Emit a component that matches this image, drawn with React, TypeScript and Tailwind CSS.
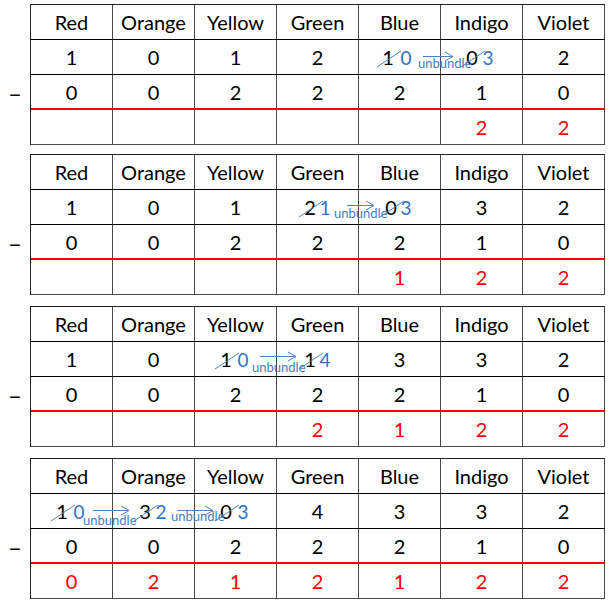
import React from "react";

const HEAD = ["Red", "Orange", "Yellow", "Green", "Blue", "Indigo", "Violet"];

type Ann = {
  black: [number, string][];
  blue: [number, string][];
  arrows: [number, number, number][];
  labels: [number, number][];
};

type T = {
  top: string[];
  sub: string[];
  res: string[];
  ann: Ann;
  mt: string;
};

const TABLES: T[] = [
  {
    top: ["1", "0", "1", "2", "", "", "2"],
    sub: ["0", "0", "2", "2", "2", "1", "0"],
    res: ["", "", "", "", "", "2", "2"],
    mt: "mt-[4px]",
    ann: {
      black: [
        [357, "1"],
        [441, "0"],
      ],
      blue: [
        [375, "0"],
        [457, "3"],
      ],
      arrows: [[392, 422, 16]],
      labels: [[387, 17]],
    },
  },
  {
    top: ["1", "0", "1", "", "", "3", "2"],
    sub: ["0", "0", "2", "2", "2", "1", "0"],
    res: ["", "", "", "", "1", "2", "2"],
    mt: "mt-[9px]",
    ann: {
      black: [
        [279, "2"],
        [360, "0"],
      ],
      blue: [
        [294, "1"],
        [375, "3"],
      ],
      arrows: [[316, 343, 15]],
      labels: [[303, 17]],
    },
  },
  {
    top: ["1", "0", "", "", "3", "3", "2"],
    sub: ["0", "0", "2", "2", "2", "1", "0"],
    res: ["", "", "", "2", "1", "2", "2"],
    mt: "mt-[11px]",
    ann: {
      black: [
        [195, "1"],
        [279, "1"],
      ],
      blue: [
        [212, "0"],
        [294, "4"],
      ],
      arrows: [[229, 265, 14]],
      labels: [[221, 19]],
    },
  },
  {
    top: ["", "", "", "4", "3", "3", "2"],
    sub: ["0", "0", "2", "2", "2", "1", "0"],
    res: ["0", "2", "1", "2", "1", "2", "2"],
    mt: "mt-[11px]",
    ann: {
      black: [
        [31, "1"],
        [114, "3"],
        [195, "0"],
      ],
      blue: [
        [48, "0"],
        [130, "2"],
        [212, "3"],
      ],
      arrows: [
        [62, 98, 16],
        [146, 182, 16],
      ],
      labels: [
        [52, 20],
        [140, 16],
      ],
    },
  },
];

function Row({
  cells,
  className,
  textClass,
  children,
}: {
  cells: string[];
  className: string;
  textClass: string;
  children?: React.ReactNode;
}) {
  return (
    <div className={`relative grid grid-cols-[repeat(7,82px)] h-[35px] ${className}`}>
      {cells.map((c, i) => (
        <div
          key={i}
          className={`flex items-center justify-center border-r border-[#4a4a4a] ${textClass}`}
        >
          {c}
        </div>
      ))}
      {children}
    </div>
  );
}

function Overlay({ ann }: { ann: Ann }) {
  return (
    <div className="absolute inset-0 pointer-events-none">
      {ann.black.map(([x, t], i) => (
        <span
          key={"k" + i}
          className="absolute top-0 h-full flex items-center -translate-x-1/2 text-[20px] text-black"
          style={{ left: x }}
        >
          {t}
        </span>
      ))}
      {ann.blue.map(([x, t], i) => (
        <span
          key={"b" + i}
          className="absolute top-[1px] h-full flex items-center -translate-x-1/2 text-[19px] text-[#2e75c6]"
          style={{ left: x }}
        >
          {t}
        </span>
      ))}
      {ann.labels.map(([x, y], i) => (
        <span
          key={"l" + i}
          className="absolute leading-none text-[13px] text-[#3d7fc0]"
          style={{ left: x, top: y }}
        >
          unbundle
        </span>
      ))}
      <svg className="absolute inset-0" width={574} height={35}>
        {ann.black.map(([x], i) => (
          <line
            key={"s" + i}
            x1={x - 11}
            y1={27}
            x2={x + 13}
            y2={11}
            stroke="#4f81bd"
            strokeWidth={1}
          />
        ))}
        {ann.arrows.map(([x1, x2, y], i) => (
          <g key={"a" + i} stroke="#4f81bd" strokeWidth={1} fill="none">
            <line x1={x1} y1={y + 0.5} x2={x2} y2={y + 0.5} />
            <polyline points={`${x2 - 8},${y - 4} ${x2},${y + 0.5} ${x2 - 8},${y + 5}`} />
          </g>
        ))}
      </svg>
    </div>
  );
}

function Table({ t }: { t: T }) {
  return (
    <div className={`flex ${t.mt}`}>
      <div className="w-[30px] flex flex-col">
        <div className="h-[71px]" />
        <div className="h-[35px] flex items-center justify-center text-[24px] leading-none text-black">–</div>
      </div>
      <div className="border-l border-t border-[#222] w-[575px]">
        <Row cells={HEAD} className="border-b border-black" textClass="text-black text-[20px]" />
        <Row cells={t.top} className="border-b border-black" textClass="text-black text-[20px]">
          <Overlay ann={t.ann} />
        </Row>
        <Row cells={t.sub} className="border-b-2 border-[#ff0000]" textClass="text-black text-[20px]" />
        <Row cells={t.res} className="border-b border-[#4a4a4a]" textClass="text-[#ff0000] text-[20px]" />
      </div>
    </div>
  );
}

export default function App() {
  return (
    <div className="w-[609px] h-[605px] bg-white font-[Lato,sans-serif] overflow-hidden">
      {TABLES.map((t, i) => (
        <Table key={i} t={t} />
      ))}
    </div>
  );
}
